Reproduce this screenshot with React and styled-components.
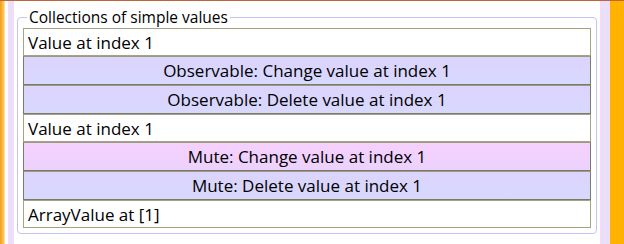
import React from 'react';
import styled, { createGlobalStyle } from 'styled-components';

const GlobalStyle = createGlobalStyle`
  html, body {
    margin: 0;
    padding: 0;
    background: #ffffff;
    overflow: hidden;
  }
  * { box-sizing: border-box; }
`;

const rows = [
  { kind: 'text', label: 'Value at index 1' },
  { kind: 'button', label: 'Observable: Change value at index 1' },
  { kind: 'button', label: 'Observable: Delete value at index 1' },
  { kind: 'text', label: 'Value at index 1' },
  { kind: 'button', label: 'Mute: Change value at index 1', pink: true },
  { kind: 'button', label: 'Mute: Delete value at index 1' },
  { kind: 'text', label: 'ArrayValue at [1]' },
];

function App() {
  return (
    <>
      <GlobalStyle />
      <Window>
        <LeftEdge />
        <Frame $w={6} />
        <Client>
          <GroupBox>
            <Legend>Collections of simple values</Legend>
            <Stack>
              {rows.map((r, i) =>
                r.kind === 'text' ? (
                  <TextBox key={i}>{r.label}</TextBox>
                ) : (
                  <Button key={i} $pink={r.pink}>{r.label}</Button>
                )
              )}
            </Stack>
          </GroupBox>
        </Client>
        <Frame $w={10} />
        <RightEdge />
      </Window>
    </>
  );
}

const Window = styled.div`
  display: flex;
  width: 624px;
  height: 244px;
  border-top: 1px solid #c0653a;
  font-family: "Open Sans", "Noto Sans", sans-serif;
  color: #000;
`;

const LeftEdge = styled.div`
  width: 5px;
  background: linear-gradient(90deg, #f39c12, #fbc45a 70%, #fde7c0);
  margin-right: 3px;
`;

const Frame = styled.div`
  width: ${p => p.$w}px;
  background: repeating-linear-gradient(90deg, #f4dcf8 0 2px, #e2e2fb 2px 4px);
`;

const RightEdge = styled.div`
  width: 14px;
  background: #ffb300;
`;

const Client = styled.div`
  flex: 1;
  padding: 6px 3px 0 3px;
  background: #ffffff;
`;

const GroupBox = styled.fieldset`
  margin: 0;
  padding: 1px 5px 4px 5px;
  border: 1px solid #c4c4f4;
  border-radius: 4px;
  height: 227px;
`;

const Legend = styled.legend`
  margin-left: 4px;
  padding: 0 2px;
  font-size: 15.5px;
  line-height: 20px;
`;

const Stack = styled.div`
  display: flex;
  flex-direction: column;
`;

const TextBox = styled.div`
  height: 28px;
  display: flex;
  align-items: center;
  padding-left: 4px;
  border: 1px solid #a4a482;
  background: #ffffff;
  font-size: 17px;
`;

const Button = styled.div`
  height: 29px;
  display: flex;
  align-items: center;
  justify-content: center;
  border: 1px solid #7a7a6a;
  border-top-color: #9a9a86;
  background: ${p =>
    p.$pink
      ? 'linear-gradient(180deg, #f6d0fe, #ecd2fd)'
      : 'linear-gradient(180deg, #dcd4fd, #d8d8fe)'};
  font-size: 17px;
`;

export default App;
